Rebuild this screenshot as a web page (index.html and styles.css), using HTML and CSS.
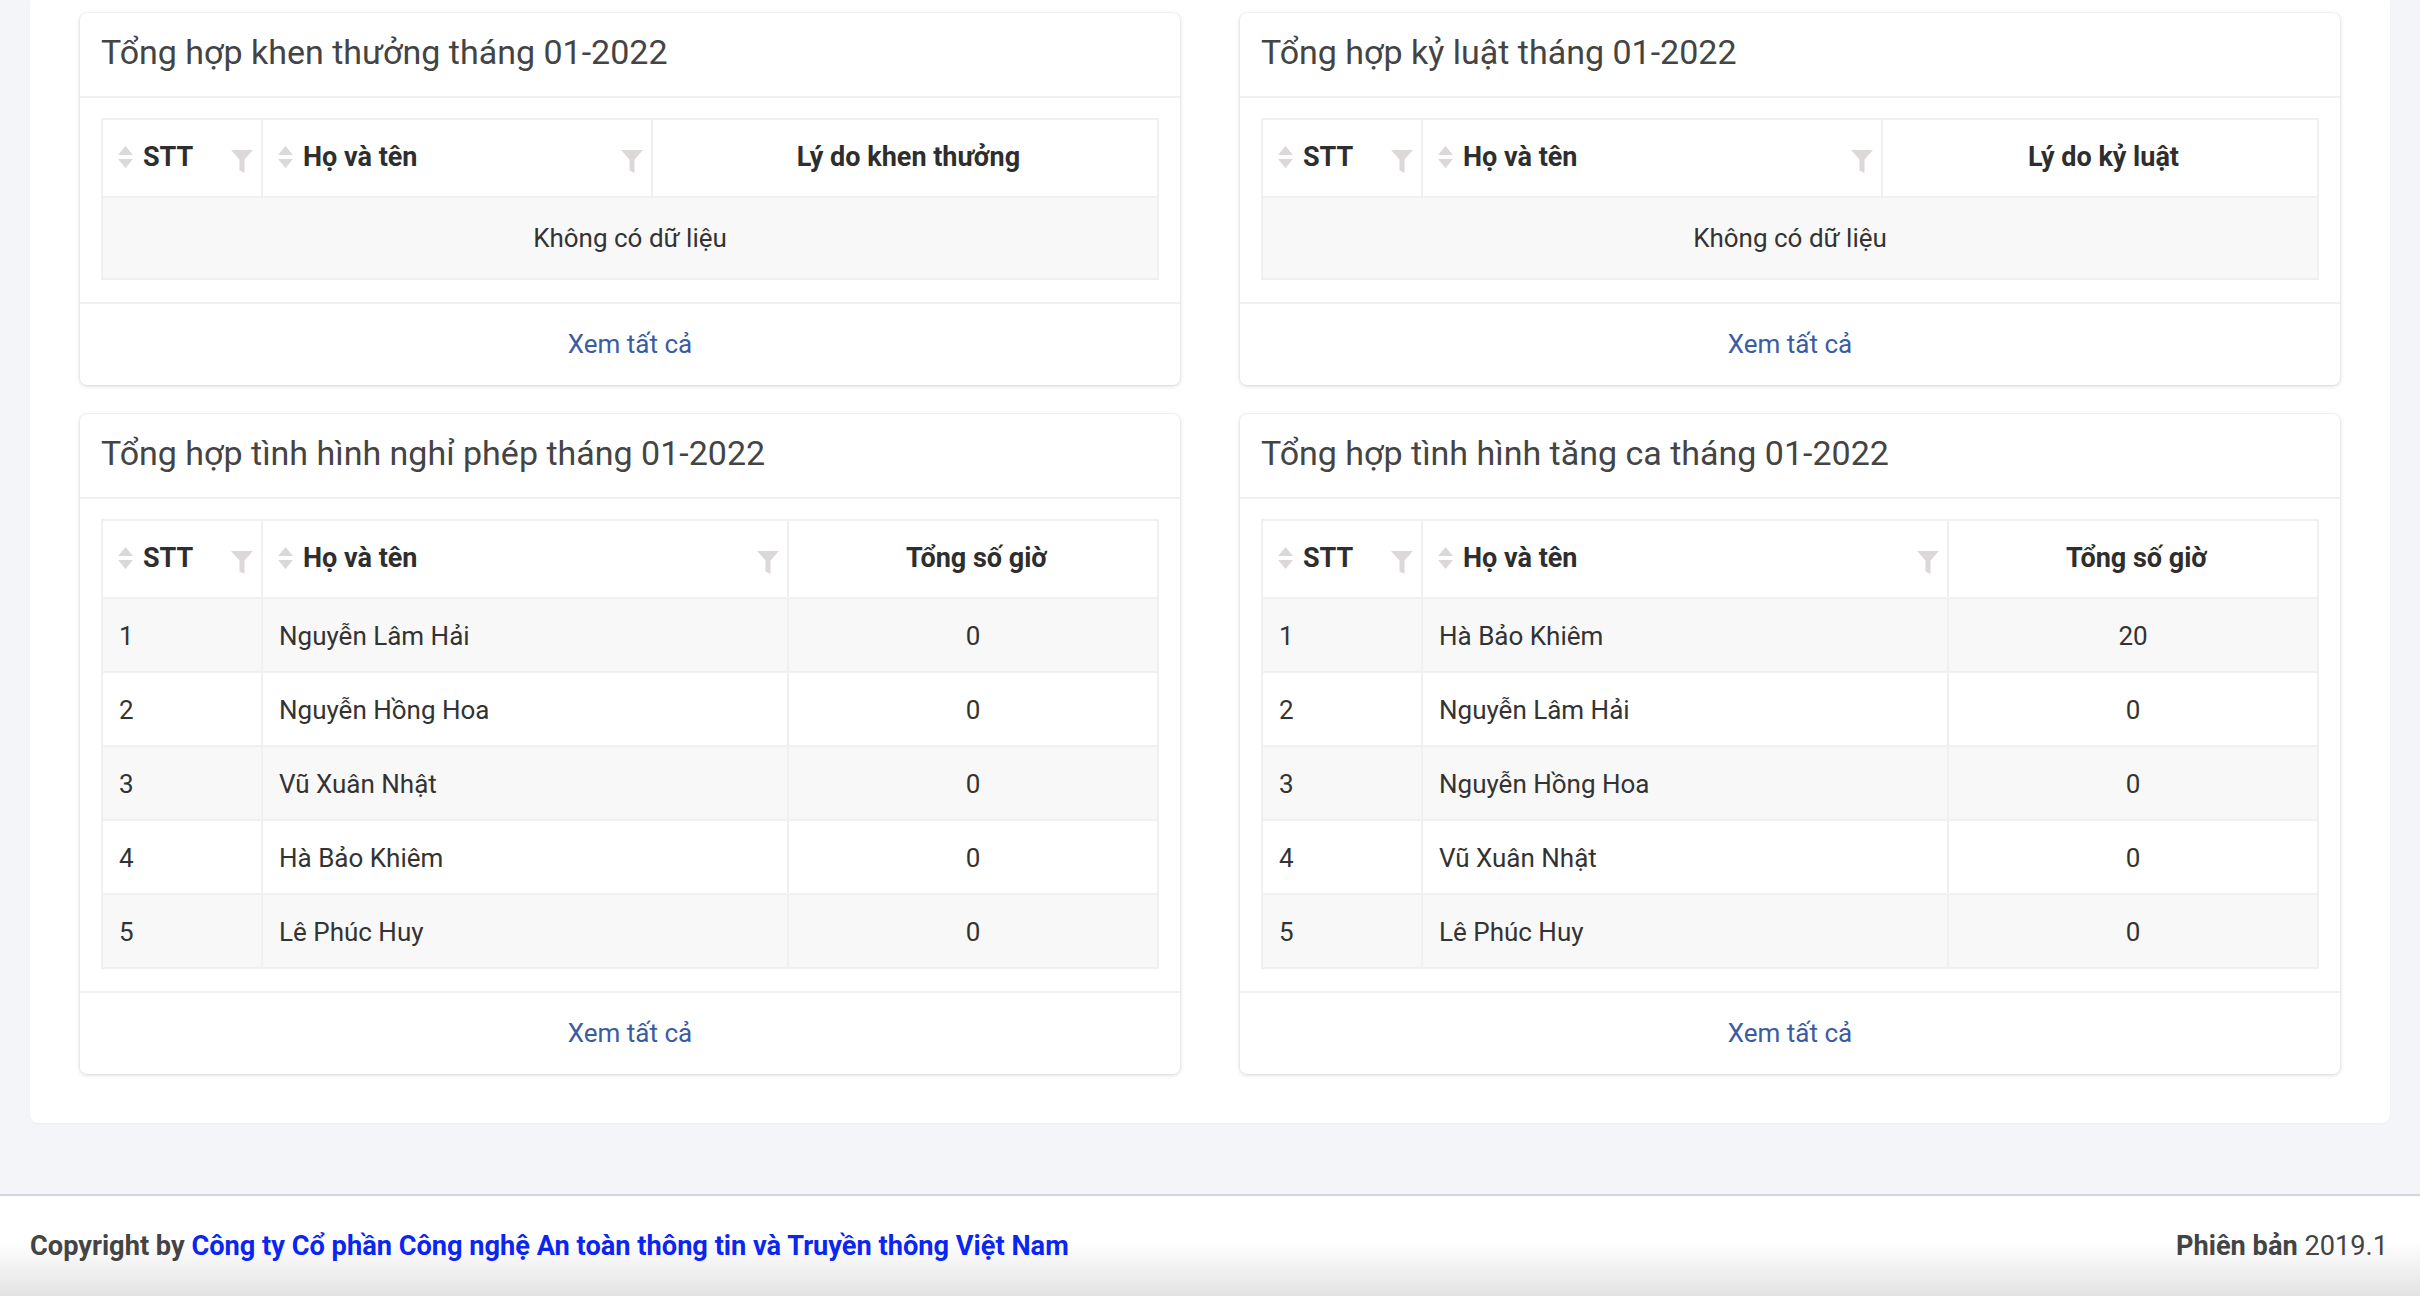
FILE: index.html
```html
<!DOCTYPE html>
<html lang="vi">
<head>
<meta charset="utf-8">
<title>Tổng hợp</title>
<link rel="stylesheet" href="styles.css">
</head>
<body>
<main class="content">
  <div class="panel">
    <section class="card">
      <header class="card-head"><h2 class="card-title">Tổng hợp khen thưởng tháng 01-2022</h2></header>
      <div class="card-body">
        <table class="grid">
          <colgroup><col class="c-stt"><col class="c-name-a"><col></colgroup>
          <thead>
            <tr>
              <th><div class="th-in"><svg class="sort" width="15" height="22" viewBox="0 0 15 22"><path d="M7.5 0L15 9H0Z M0 13H15L7.5 22Z"/></svg><span>STT</span><svg class="filter" width="22" height="23" viewBox="0 0 22 23"><path d="M0 0H22L13.5 9.5V23L8.5 20.5V9.5Z"/></svg></div></th>
              <th><div class="th-in"><svg class="sort" width="15" height="22" viewBox="0 0 15 22"><path d="M7.5 0L15 9H0Z M0 13H15L7.5 22Z"/></svg><span>Họ và tên</span><svg class="filter" width="22" height="23" viewBox="0 0 22 23"><path d="M0 0H22L13.5 9.5V23L8.5 20.5V9.5Z"/></svg></div></th>
              <th class="center">Lý do khen thưởng</th>
            </tr>
          </thead>
          <tbody>
            <tr class="odd"><td colspan="3" class="empty">Không có dữ liệu</td></tr>
          </tbody>
        </table>
      </div>
      <footer class="card-foot"><a class="more" href="#">Xem tất cả</a></footer>
    </section>

    <section class="card">
      <header class="card-head"><h2 class="card-title">Tổng hợp kỷ luật tháng 01-2022</h2></header>
      <div class="card-body">
        <table class="grid">
          <colgroup><col class="c-stt"><col class="c-name-b"><col></colgroup>
          <thead>
            <tr>
              <th><div class="th-in"><svg class="sort" width="15" height="22" viewBox="0 0 15 22"><path d="M7.5 0L15 9H0Z M0 13H15L7.5 22Z"/></svg><span>STT</span><svg class="filter" width="22" height="23" viewBox="0 0 22 23"><path d="M0 0H22L13.5 9.5V23L8.5 20.5V9.5Z"/></svg></div></th>
              <th><div class="th-in"><svg class="sort" width="15" height="22" viewBox="0 0 15 22"><path d="M7.5 0L15 9H0Z M0 13H15L7.5 22Z"/></svg><span>Họ và tên</span><svg class="filter" width="22" height="23" viewBox="0 0 22 23"><path d="M0 0H22L13.5 9.5V23L8.5 20.5V9.5Z"/></svg></div></th>
              <th class="center">Lý do kỷ luật</th>
            </tr>
          </thead>
          <tbody>
            <tr class="odd"><td colspan="3" class="empty">Không có dữ liệu</td></tr>
          </tbody>
        </table>
      </div>
      <footer class="card-foot"><a class="more" href="#">Xem tất cả</a></footer>
    </section>

    <section class="card">
      <header class="card-head"><h2 class="card-title">Tổng hợp tình hình nghỉ phép tháng 01-2022</h2></header>
      <div class="card-body">
        <table class="grid">
          <colgroup><col class="c-stt"><col class="c-name-c"><col></colgroup>
          <thead>
            <tr>
              <th><div class="th-in"><svg class="sort" width="15" height="22" viewBox="0 0 15 22"><path d="M7.5 0L15 9H0Z M0 13H15L7.5 22Z"/></svg><span>STT</span><svg class="filter" width="22" height="23" viewBox="0 0 22 23"><path d="M0 0H22L13.5 9.5V23L8.5 20.5V9.5Z"/></svg></div></th>
              <th><div class="th-in"><svg class="sort" width="15" height="22" viewBox="0 0 15 22"><path d="M7.5 0L15 9H0Z M0 13H15L7.5 22Z"/></svg><span>Họ và tên</span><svg class="filter" width="22" height="23" viewBox="0 0 22 23"><path d="M0 0H22L13.5 9.5V23L8.5 20.5V9.5Z"/></svg></div></th>
              <th class="center">Tổng số giờ</th>
            </tr>
          </thead>
          <tbody>
            <tr class="odd"><td>1</td><td>Nguyễn Lâm Hải</td><td class="center">0</td></tr>
            <tr><td>2</td><td>Nguyễn Hồng Hoa</td><td class="center">0</td></tr>
            <tr class="odd"><td>3</td><td>Vũ Xuân Nhật</td><td class="center">0</td></tr>
            <tr><td>4</td><td>Hà Bảo Khiêm</td><td class="center">0</td></tr>
            <tr class="odd"><td>5</td><td>Lê Phúc Huy</td><td class="center">0</td></tr>
          </tbody>
        </table>
      </div>
      <footer class="card-foot"><a class="more" href="#">Xem tất cả</a></footer>
    </section>

    <section class="card">
      <header class="card-head"><h2 class="card-title">Tổng hợp tình hình tăng ca tháng 01-2022</h2></header>
      <div class="card-body">
        <table class="grid">
          <colgroup><col class="c-stt"><col class="c-name-c"><col></colgroup>
          <thead>
            <tr>
              <th><div class="th-in"><svg class="sort" width="15" height="22" viewBox="0 0 15 22"><path d="M7.5 0L15 9H0Z M0 13H15L7.5 22Z"/></svg><span>STT</span><svg class="filter" width="22" height="23" viewBox="0 0 22 23"><path d="M0 0H22L13.5 9.5V23L8.5 20.5V9.5Z"/></svg></div></th>
              <th><div class="th-in"><svg class="sort" width="15" height="22" viewBox="0 0 15 22"><path d="M7.5 0L15 9H0Z M0 13H15L7.5 22Z"/></svg><span>Họ và tên</span><svg class="filter" width="22" height="23" viewBox="0 0 22 23"><path d="M0 0H22L13.5 9.5V23L8.5 20.5V9.5Z"/></svg></div></th>
              <th class="center">Tổng số giờ</th>
            </tr>
          </thead>
          <tbody>
            <tr class="odd"><td>1</td><td>Hà Bảo Khiêm</td><td class="center">20</td></tr>
            <tr><td>2</td><td>Nguyễn Lâm Hải</td><td class="center">0</td></tr>
            <tr class="odd"><td>3</td><td>Nguyễn Hồng Hoa</td><td class="center">0</td></tr>
            <tr><td>4</td><td>Vũ Xuân Nhật</td><td class="center">0</td></tr>
            <tr class="odd"><td>5</td><td>Lê Phúc Huy</td><td class="center">0</td></tr>
          </tbody>
        </table>
      </div>
      <footer class="card-foot"><a class="more" href="#">Xem tất cả</a></footer>
    </section>
  </div>
</main>
<footer class="site-foot">
  <div class="copy"><strong>Copyright by</strong> <a class="company" href="#">Công ty Cổ phần Công nghệ An toàn thông tin và Truyền thông Việt Nam</a></div>
  <div class="version"><strong>Phiên bản</strong> 2019.1</div>
</footer>
</body>
</html>
```

FILE: styles.css
```css
* { box-sizing: border-box; }

html, body {
  margin: 0;
  padding: 0;
}

body {
  background: #f4f5f8;
  font-family: Roboto, "Noto Sans", sans-serif;
  color: #333;
  font-size: 26px;
  width: 2420px;
  height: 1296px;
  overflow: hidden;
}

.content {
  padding: 0 30px;
  margin-bottom: 71px;
}

.panel {
  background: #fff;
  border-radius: 0 0 8px 8px;
  box-shadow: 0 1px 2px rgba(0, 0, 0, 0.04);
  padding: 13px 50px 49px;
  display: grid;
  grid-template-columns: 1100px 1100px;
  column-gap: 60px;
  row-gap: 29px;
  align-items: start;
}

.card {
  background: #fff;
  border-radius: 7px;
  box-shadow: 0 1px 4px rgba(0, 0, 0, 0.16), 0 0 0 1px rgba(0, 0, 0, 0.025);
}

.card-head {
  padding: 22px 21px 26px;
  border-bottom: 2px solid #f0f0f0;
}

.card-title {
  margin: 0;
  font-size: 34px;
  line-height: 35px;
  font-weight: 400;
  color: #444;
}

.card-body {
  padding: 20px 21px 22px;
}

.grid {
  width: 100%;
  table-layout: fixed;
  border-collapse: collapse;
  border: 2px solid #f0f0f0;
}

.c-stt { width: 160px; }
.c-name-a { width: 390px; }
.c-name-b { width: 460px; }
.c-name-c { width: 526px; }

.grid th,
.grid td {
  border: 2px solid #f0f0f0;
  line-height: 36px;
  text-align: left;
}

.grid th {
  background: #fff;
  font-weight: 700;
  font-size: 27px;
  color: #2e2e2e;
  padding: 19px 8px 21px 15px;
}

.grid td {
  padding: 19px 16px 17px;
  font-size: 26px;
  color: #333;
}

.grid .center {
  text-align: center;
}

.grid tr.odd td {
  background: #f8f8f8;
}

.grid td.empty {
  text-align: center;
  padding: 22px 16px;
}

.th-in {
  display: flex;
  align-items: center;
}

.sort {
  fill: #dcd8d8;
  margin-right: 10px;
  flex: none;
}

.filter {
  fill: #dcd8d8;
  margin-left: auto;
  margin-top: 8px;
  flex: none;
}

.card-foot {
  border-top: 2px solid #f0f0f0;
  padding: 22px 0 23px;
  text-align: center;
  line-height: 36px;
}

.more {
  color: #3b5ba3;
  text-decoration: none;
  font-size: 26px;
}

.site-foot {
  height: 102px;
  border-top: 2px solid #d2d6de;
  background: linear-gradient(to bottom, #fff 0, #fff 45%, #e3e3e3 100%);
  padding: 0 32px 0 30px;
  display: flex;
  align-items: center;
  justify-content: space-between;
  color: #444;
  font-size: 27.2px;
}

.site-foot strong {
  font-weight: 700;
}

.company {
  color: #0b25f2;
  font-weight: 700;
  text-decoration: none;
}
```
